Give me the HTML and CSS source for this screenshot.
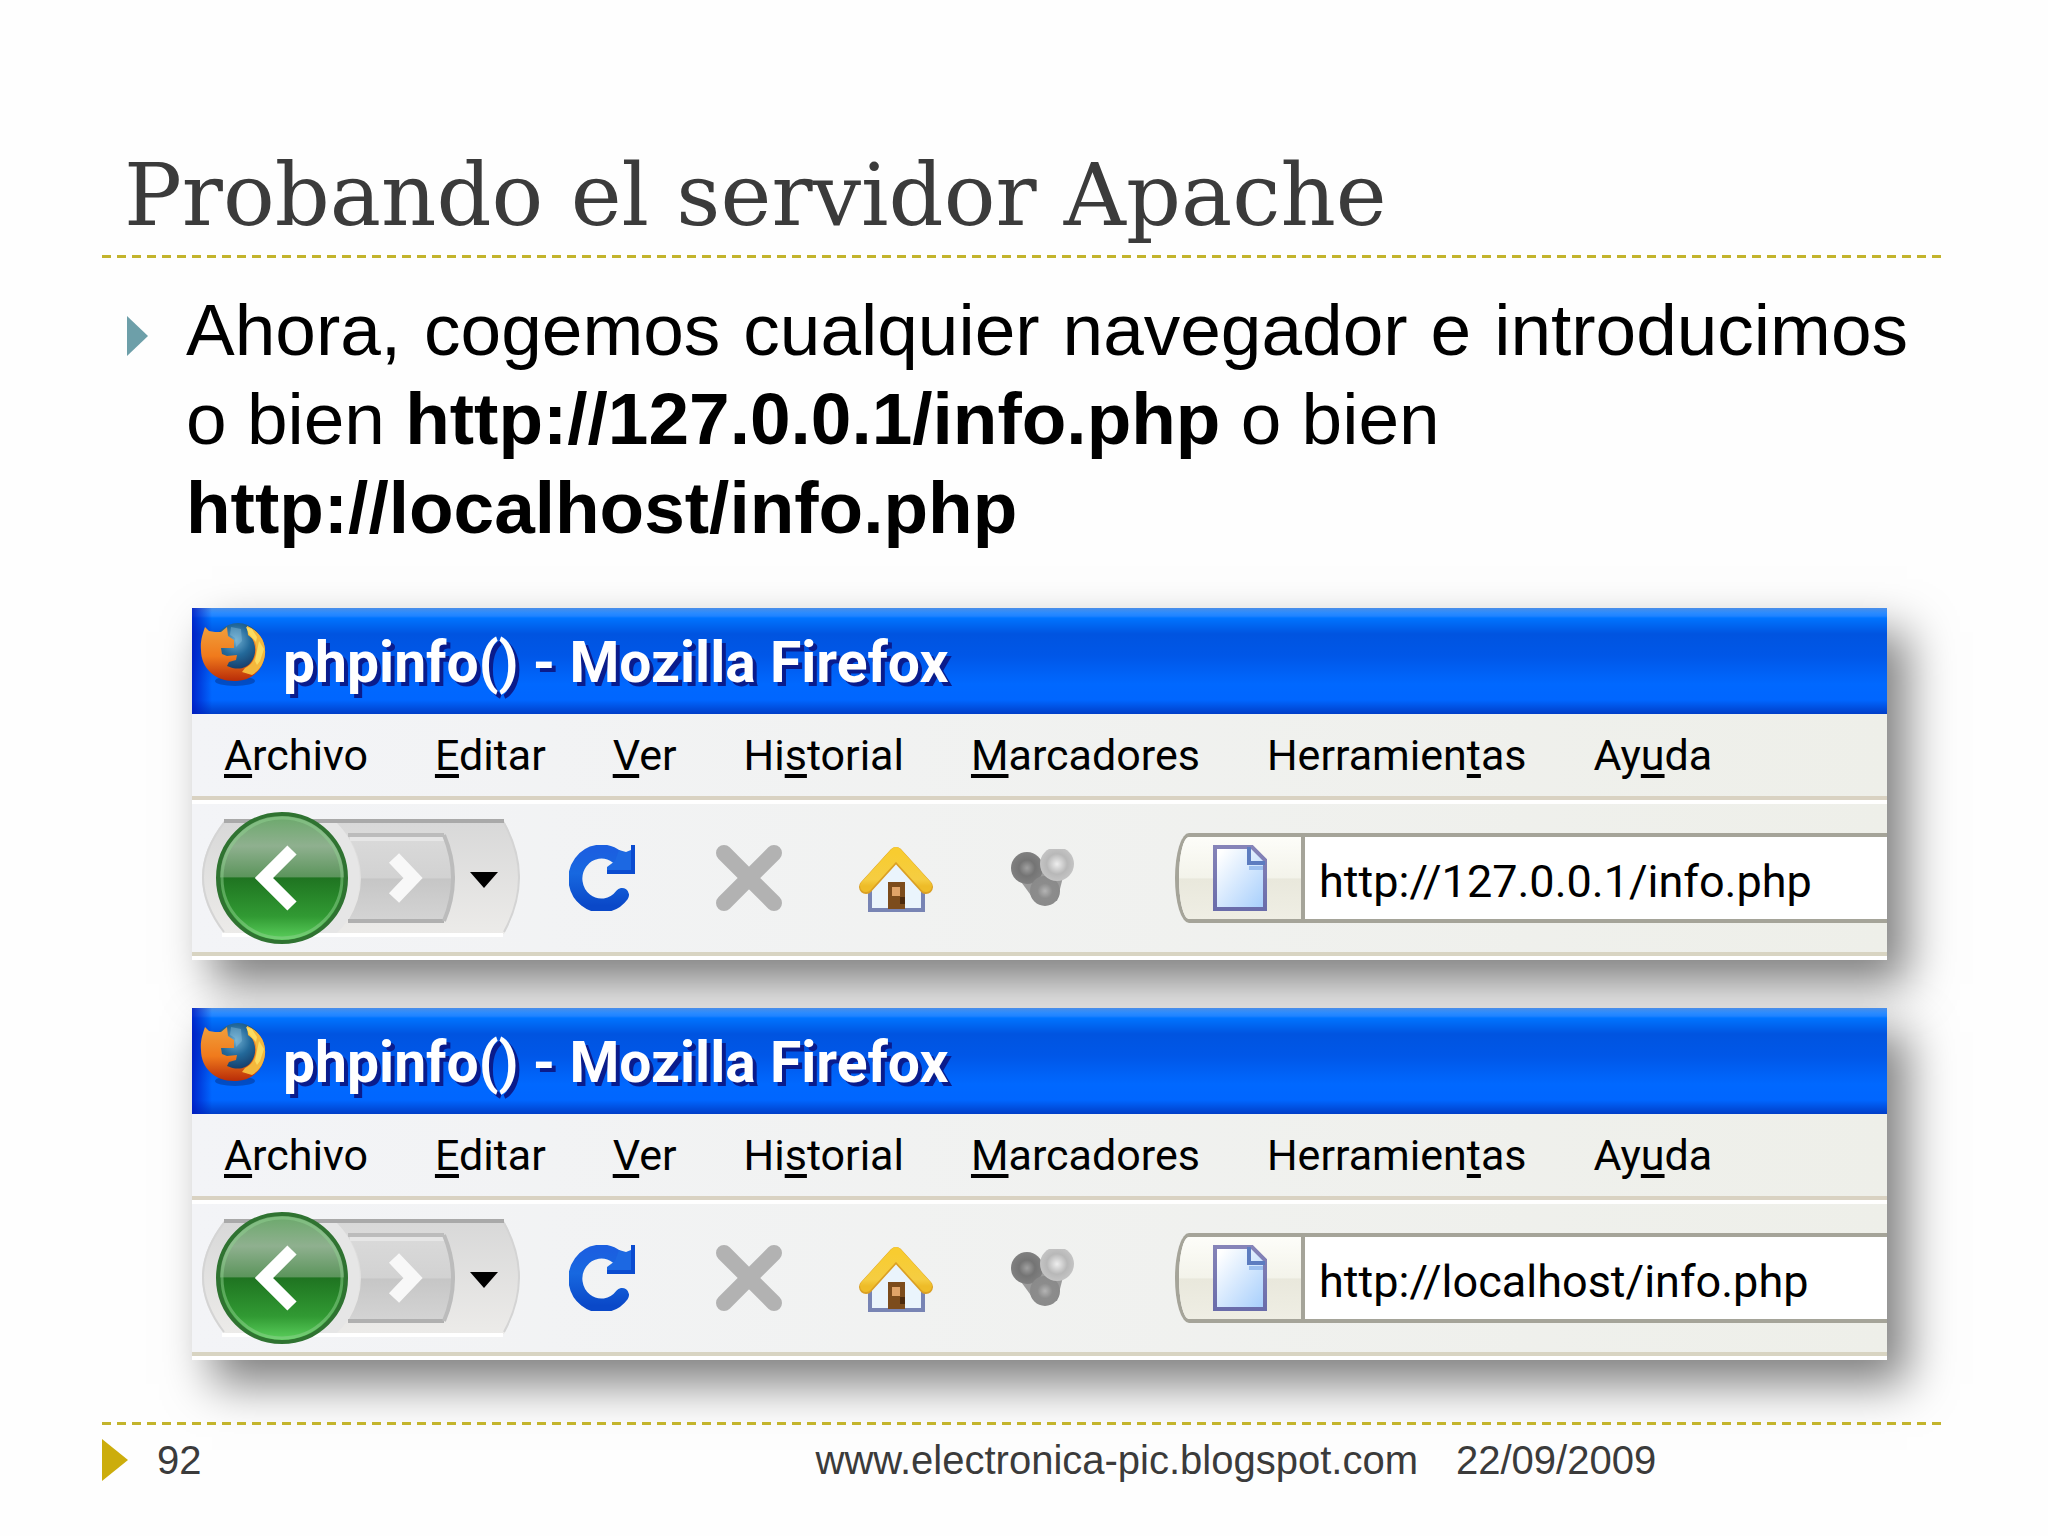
FILE: index.html
```
<!DOCTYPE html>
<html lang="es">
<head>
  <meta charset="utf-8" />
  <title>Probando el servidor Apache</title>
  <meta name="viewport" content="width=device-width, initial-scale=1.0" />
  <link rel="stylesheet" href="styles.css">
</head>
<body>
  <!-- shared icons, both windows use them -->
  <svg class="sprite" width="0" height="0" aria-hidden="true">
    <defs>
      <linearGradient id="fox" x1="0" y1="0" x2="0" y2="1">
        <stop offset="0" stop-color="#f0a03c" /><stop offset=".55" stop-color="#f07a1c" /><stop offset="1" stop-color="#b82c08" />
      </linearGradient>
      <radialGradient id="globe" cx=".45" cy=".35" r=".6">
        <stop offset="0" stop-color="#6cacd0" /><stop offset=".5" stop-color="#23699a" /><stop offset="1" stop-color="#153a66" />
      </radialGradient>
      <linearGradient id="green" x1="0" y1="0" x2="0" y2="1">
        <stop offset="0" stop-color="#69a869" /><stop offset=".25" stop-color="#8fb08f" /><stop offset=".49" stop-color="#5c955c" />
        <stop offset=".5" stop-color="#1f7421" /><stop offset=".8" stop-color="#319a33" /><stop offset="1" stop-color="#5fd460" />
      </linearGradient>
      <linearGradient id="well" x1="0" y1="0" x2="0" y2="1">
        <stop offset="0" stop-color="#d8d8d8" /><stop offset="1" stop-color="#ecebe9" />
      </linearGradient>
      <linearGradient id="grey" x1="0" y1="0" x2="0" y2="1">
        <stop offset="0" stop-color="#dadada" /><stop offset=".5" stop-color="#d2d2d2" /><stop offset=".51" stop-color="#c6c6c6" /><stop offset="1" stop-color="#d4d4d4" />
      </linearGradient>
      <linearGradient id="blue" x1="0" y1="0" x2="0" y2="1">
        <stop offset="0" stop-color="#1b5fe0" /><stop offset=".4" stop-color="#1768e0" /><stop offset="1" stop-color="#0a48c8" />
      </linearGradient>
      <linearGradient id="roof" x1="0" y1="0" x2="0" y2="1">
        <stop offset="0" stop-color="#f8cc30" /><stop offset=".8" stop-color="#f5cd42" /><stop offset="1" stop-color="#eebc28" />
      </linearGradient>
      <linearGradient id="paper" x1="0" y1="0" x2="1" y2="1">
        <stop offset=".1" stop-color="#fff" /><stop offset="1" stop-color="#a4cdfc" />
      </linearGradient>
      <linearGradient id="paperedge" x1="0" y1="0" x2="0" y2="1">
        <stop offset="0" stop-color="#8684b8" /><stop offset="1" stop-color="#6a6caa" />
      </linearGradient>
      <radialGradient id="ball1"><stop offset="0" stop-color="#a0a0a0" /><stop offset=".5" stop-color="#747474" /><stop offset="1" stop-color="#808080" /></radialGradient>
      <radialGradient id="ball2"><stop offset="0" stop-color="#eee" /><stop offset=".6" stop-color="#b8b8b8" /><stop offset="1" stop-color="#c4c4c4" /></radialGradient>
      <radialGradient id="ball3"><stop offset="0" stop-color="#b4b4b4" /><stop offset=".5" stop-color="#8c8c8c" /><stop offset="1" stop-color="#8a8a8a" /></radialGradient>
    </defs>
    <symbol id="i-firefox" viewBox="0 0 66 66">
      <ellipse cx="35" cy="58" rx="20" ry="5" fill="#04256b" opacity=".4" />
      <circle cx="38" cy="25" r="25" fill="url(#globe)" />
      <path d="M47 3 C59 8 66 18 65 31 C63 49 50 58 34 58 C15 58 1 45 1 27 C0 18 3 10 5 4 L9 8 L15 9 L21 9 L27 4 L28 13 L34 17 L34 25 L21 25 L22 31 L27 33 L37 32 L36 37 L29 39 L27 43 C36 47 46 47 52 38 C57 30 56 20 50 12 Z" fill="url(#fox)" />
      <path d="M47 3 C59 8 66 18 65 31 C64 41 59 48 52 52 L42 49 L45 45 C56 40 59 26 54 17 L48 12 Z" fill="#f4b83c" />
      <path d="M46 4 L52 6 L57 14 L56 19 L49 11 Z M59 18 L64 26 L60 38 L57 42 L55 38 Z" fill="#fbdc60" />
      <path d="M31 4 L41 6 L42 18 L36 24 L35 15 L30 12 Z" fill="#8fc4de" opacity=".4" />
    </symbol>
    <symbol id="i-well" viewBox="0 0 320 118">
      <path d="M24 2 H304 Q334 58 304 115 H24 Q-20 58 24 2 Z" fill="url(#well)" />
      <path d="M24 4 Q-18 58 24 113 M304 4 Q334 58 304 113" fill="none" stroke="#d4d4d4" stroke-width="2" />
      <path d="M82 4 H137 A78 78 0 0 1 137 114 H82 Z" fill="#e6e6e6" />
      <path d="M24 2 H304" stroke="#a9a9a9" stroke-width="4" />
      <path d="M22 116 H303" stroke="#fff" stroke-width="4" />
    </symbol>
    <symbol id="i-back" viewBox="0 0 132 132">
      <circle cx="66" cy="66" r="64" fill="url(#green)" stroke="#2f7331" stroke-width="4" />
      <circle cx="66" cy="66" r="60" fill="none" stroke="#8fd08f" stroke-width="3" opacity=".5" />
      <path d="M76 38 L48 66 L76 94" fill="none" stroke="#fff" stroke-width="13" />
    </symbol>
    <symbol id="i-forward" viewBox="0 0 107 90">
      <path d="M0 2 H96 Q114 45 96 88 H0 Q26 45 0 2 Z" fill="url(#grey)" />
      <path d="M0 2 H96" stroke="#bcbcbc" stroke-width="4" />
      <path d="M2 6 H96" stroke="#e6e6e6" stroke-width="4" />
      <path d="M0 88 H96" stroke="#b0b0b0" stroke-width="4" />
      <path d="M96 2 Q114 45 96 88" fill="none" stroke="#bcbcbc" stroke-width="4" />
      <path d="M46 25 L65 45 L46 65" fill="none" stroke="#f8f8f8" stroke-width="14" />
    </symbol>
    <symbol id="i-reload" viewBox="0 0 66 66">
      <path d="M53 50 A26 27 0 1 1 48 12" fill="none" stroke="url(#blue)" stroke-width="14" stroke-linecap="round" />
      <path d="M66 0 V29 H38 V22 L46 16 L50 5 L57 7 L62 5 V0 Z" fill="#1c68e2" />
      <path d="M64 0 V27 H38" fill="none" stroke="#0b4cd0" stroke-width="4" />
    </symbol>
    <symbol id="i-stop" viewBox="0 0 66 66">
      <path d="M8 8 L58 58 M58 8 L8 58" stroke="#b2b2b2" stroke-width="16" stroke-linecap="round" />
    </symbol>
    <symbol id="i-home" viewBox="0 0 74 68">
      <path d="M37 16 L9 44 V68 H66 V44 Z" fill="#eaf4fc" />
      <path d="M11 46 V66 H64 V46" fill="none" stroke="#7884b4" stroke-width="4" />
      <path d="M29 38 H46 V65 H29 Z" fill="#7c4c1c" />
      <path d="M33 43 H41 V52 H33 Z" fill="#e0a468" />
      <path d="M41 53 H46 V60 H41 Z" fill="#4c2a0c" />
      <path d="M7 43 L37 10 L67 43" fill="none" stroke="#dba024" stroke-width="14" stroke-linecap="round" stroke-linejoin="round" />
      <path d="M7 42 L37 9 L67 42" fill="none" stroke="url(#roof)" stroke-width="12" stroke-linecap="round" stroke-linejoin="round" />
    </symbol>
    <symbol id="i-balls" viewBox="0 0 64 58">
      <path d="M8 30 L32 14 L52 28 L46 52 H24 Z" fill="#9a9a9a" />
      <circle cx="16" cy="19" r="16" fill="url(#ball1)" />
      <circle cx="34" cy="42" r="15" fill="url(#ball3)" />
      <circle cx="46" cy="15" r="17" fill="url(#ball2)" />
    </symbol>
    <symbol id="i-page" viewBox="0 0 54 66">
      <path d="M2 2 H39 L52 15 V64 H2 Z" fill="url(#paper)" stroke="url(#paperedge)" stroke-width="4" />
      <path d="M36 2 V18 H52" fill="none" stroke="#5c7cc0" stroke-width="4" />
      <path d="M36 23 H50" stroke="#9cc0f0" stroke-width="4" />
    </symbol>
  </svg>

  <main class="slide">
    <h1>Probando el servidor Apache</h1>
    <hr class="rule">
    <ul class="points">
      <li>
        <p>Ahora, cogemos cualquier navegador e introducimos o bien <b>http://127.0.0.1/info.php</b> o bien<br><b>http://localhost/info.php</b></p>
      </li>
    </ul>

    <div class="windows">
      <section class="window">
        <header class="titlebar">
          <svg width="66" height="66" aria-hidden="true"><use href="#i-firefox" /></svg>
          <h2>phpinfo() - Mozilla Firefox</h2>
        </header>
        <nav class="menubar">
          <button><u>A</u>rchivo</button>
          <button><u>E</u>ditar</button>
          <button><u>V</u>er</button>
          <button>Hi<u>s</u>torial</button>
          <button><u>M</u>arcadores</button>
          <button>Herramien<u>t</u>as</button>
          <button>Ay<u>u</u>da</button>
        </nav>
        <div class="toolbar">
          <div class="history">
            <svg class="well" width="320" height="118" aria-hidden="true"><use href="#i-well" /></svg>
            <button class="back" aria-label="Atrás"><svg width="132" height="132"><use href="#i-back" /></svg></button>
            <button class="forward" aria-label="Adelante"><svg width="107" height="90"><use href="#i-forward" /></svg></button>
            <button class="recent" aria-label="Páginas recientes"></button>
          </div>
          <button class="tool" aria-label="Recargar"><svg width="66" height="66"><use href="#i-reload" /></svg></button>
          <button class="tool" aria-label="Detener"><svg width="66" height="66"><use href="#i-stop" /></svg></button>
          <button class="tool" aria-label="Inicio"><svg width="74" height="68"><use href="#i-home" /></svg></button>
          <button class="tool" aria-label="Complementos"><svg width="64" height="58"><use href="#i-balls" /></svg></button>
          <div class="address">
            <label for="url1" aria-label="Dirección"><svg width="54" height="66"><use href="#i-page" /></svg></label>
            <input id="url1" type="text" value="http://127.0.0.1/info.php">
          </div>
        </div>
      </section>

      <section class="window">
        <header class="titlebar">
          <svg width="66" height="66" aria-hidden="true"><use href="#i-firefox" /></svg>
          <h2>phpinfo() - Mozilla Firefox</h2>
        </header>
        <nav class="menubar">
          <button><u>A</u>rchivo</button>
          <button><u>E</u>ditar</button>
          <button><u>V</u>er</button>
          <button>Hi<u>s</u>torial</button>
          <button><u>M</u>arcadores</button>
          <button>Herramien<u>t</u>as</button>
          <button>Ay<u>u</u>da</button>
        </nav>
        <div class="toolbar">
          <div class="history">
            <svg class="well" width="320" height="118" aria-hidden="true"><use href="#i-well" /></svg>
            <button class="back" aria-label="Atrás"><svg width="132" height="132"><use href="#i-back" /></svg></button>
            <button class="forward" aria-label="Adelante"><svg width="107" height="90"><use href="#i-forward" /></svg></button>
            <button class="recent" aria-label="Páginas recientes"></button>
          </div>
          <button class="tool" aria-label="Recargar"><svg width="66" height="66"><use href="#i-reload" /></svg></button>
          <button class="tool" aria-label="Detener"><svg width="66" height="66"><use href="#i-stop" /></svg></button>
          <button class="tool" aria-label="Inicio"><svg width="74" height="68"><use href="#i-home" /></svg></button>
          <button class="tool" aria-label="Complementos"><svg width="64" height="58"><use href="#i-balls" /></svg></button>
          <div class="address">
            <label for="url2" aria-label="Dirección"><svg width="54" height="66"><use href="#i-page" /></svg></label>
            <input id="url2" type="text" value="http://localhost/info.php">
          </div>
        </div>
      </section>
    </div>

    <footer>
      <hr class="rule">
      <div class="footline">
        <span class="number">92</span>
        <span class="site">www.electronica-pic.blogspot.com</span>
        <span class="date">22/09/2009</span>
      </div>
    </footer>
  </main>
</body>
</html>
```
FILE: styles.css
```
* {
  box-sizing: border-box;
}

body {
  margin: 0;
  background: #fefefe;
  color: #000;
  font-family: "Liberation Sans", Arial, sans-serif;
}

h1, h2, p, ul {
  margin: 0;
  padding: 0;
}

svg {
  display: block;
}

button {
  border: 0;
  padding: 0;
  background: none;
  color: inherit;
  font: inherit;
}

.sprite {
  position: absolute;
}

.slide {
  display: flex;
  flex-direction: column;
  min-height: 100vh;
  padding: 145px 102px 53px;
}

h1 {
  padding-left: 22px;
  font: 86px/100px "DejaVu Serif", serif;
  color: #3b3b3b;
}

.rule {
  width: 100%;
  height: 3px;
  margin: 10px 0 0;
  border: 0;
  background: repeating-linear-gradient(90deg, #c3b42c 0 9px, transparent 9px 15px);
}

.points {
  padding: 27px 38px 0 25px;
  list-style: none;
}

.points li {
  display: flex;
  font-size: 73px;
  line-height: 89px;
}

.points li::before {
  content: "";
  flex: none;
  width: 21px;
  height: 40px;
  margin: 31px 38px 0 0;
  background: #6d9fa9;
  clip-path: polygon(0 0, 100% 50%, 0 100%);
}

.points p {
  flex: 1;
  text-align: justify;
}

/* browser windows */
.windows {
  display: flex;
  flex-direction: column;
  gap: 48px;
  padding: 56px 59px 0 90px;
}

.window {
  font-family: Roboto, sans-serif;
  background: linear-gradient(90deg, #f3f4f7, #eeefe9);
  box-shadow: 20px 24px 44px rgba(0, 0, 0, .5);
}

.titlebar {
  display: flex;
  align-items: center;
  gap: 17px;
  height: 106px;
  padding: 4px 8px 0;
  background:
    linear-gradient(90deg, rgba(0, 20, 190, .8), transparent 20px),
    linear-gradient(#4a8ee8 0, #2a8bff 5px, #2083ff 8px, #0074ff 10px, #0054e0 26px, #0057e8 48px, #0068ff 76px, #0066ff 92px, #003ec8 106px);
}

.titlebar svg {
  margin-bottom: 14px;
}

h2 {
  font-size: 57px;
  font-weight: bold;
  line-height: 66px;
  color: #fff;
  text-shadow: 4px 4px 0 #0a1c8c;
}

.menubar {
  display: flex;
  align-items: center;
  gap: 67px;
  height: 90px;
  padding: 0 32px 4px;
  border-bottom: 4px solid #fff;
  box-shadow: inset 0 -4px #d9d2c2;
  font-size: 43px;
}

.menubar u {
  text-decoration-thickness: 4px;
  text-underline-offset: 4px;
  text-decoration-skip-ink: none;
}

.toolbar {
  display: flex;
  align-items: center;
  height: 156px;
  padding: 0 0 4px 8px;
  border-bottom: 4px solid #fff;
  box-shadow: inset 0 -4px #d8d4c2;
}

.history {
  position: relative;
  display: flex;
  align-items: center;
  width: 320px;
  margin-right: 8px;
}

/* sunken plate behind the history buttons */
.well {
  position: absolute;
  left: 0;
}

.back {
  z-index: 1;
  margin-left: 16px;
}

.forward {
  z-index: 1;
}

.recent {
  z-index: 1;
  width: 28px;
  height: 16px;
  margin: 4px 0 0 15px;
  background: #000;
  clip-path: polygon(0 0, 100% 0, 50% 100%);
}

.tool {
  display: flex;
  flex: none;
  justify-content: center;
  width: 147px;
}

.address {
  display: flex;
  flex: 1;
  min-width: 0;
  height: 90px;
  margin-left: 59px;
  border: 4px solid #a5a499;
  border-right: 0;
  border-radius: 14px 0 0 14px / 45px 0 0 45px;
  background: #fff;
  overflow: hidden;
}

.address label {
  display: flex;
  flex: none;
  align-items: center;
  justify-content: center;
  width: 126px;
  border-right: 4px solid #a5a499;
  background: linear-gradient(#fdfdf9, #f3f3ea 50%, #e9e8dc 51%, #efeee4);
}

.address input {
  flex: 1;
  min-width: 0;
  border: 0;
  padding: 6px 0 0 14px;
  background: none;
  color: #000;
  font: 45px Roboto, sans-serif;
}

footer {
  margin-top: auto;
  color: #3b3b3b;
  font-size: 40px;
  line-height: 46px;
}

.footline {
  display: flex;
  align-items: center;
  padding-top: 12px;
}

.footline::before {
  content: "";
  width: 26px;
  height: 42px;
  margin-right: 29px;
  background: #ccad0c;
  clip-path: polygon(0 0, 100% 50%, 0 100%);
}

.site {
  margin-left: auto;
}

.date {
  width: 490px;
  margin-left: 38px;
}
```
